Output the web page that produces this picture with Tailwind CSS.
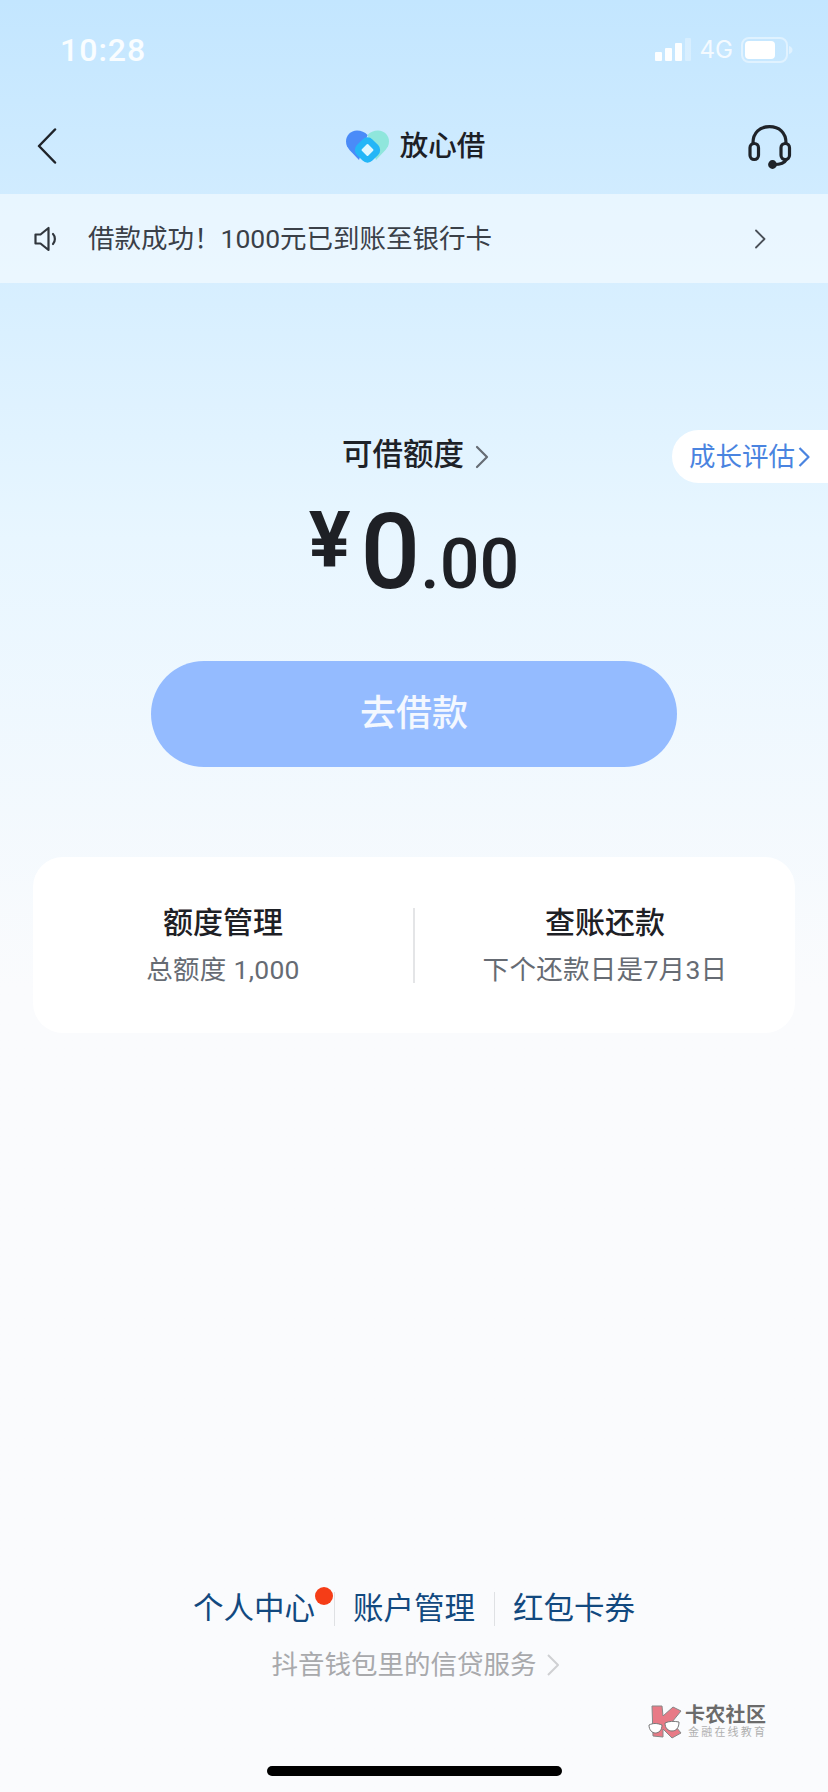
<!DOCTYPE html>
<html lang="zh-CN">
<head>
    <meta charset="UTF-8">
    <meta name="viewport" content="width=device-width, initial-scale=1.0">
    <title>放心借</title>
    <script src="https://cdn.jsdelivr.net/npm/@tailwindcss/browser@4"></script>
</head>
<body class="font-['Roboto','Noto_Sans_CJK_SC',sans-serif]">
    <div class="relative w-[828px] h-[1792px] overflow-hidden flex flex-col bg-gradient-to-b from-[#c3e6ff] via-[#e8f6ff] via-30% to-[#fafbfd] to-55%">
        <!-- status bar -->
        <div class="h-[100px] shrink-0 flex justify-between items-start pl-[60px] pr-[33px]">
            <span class="mt-[34px] text-[32px] leading-[32px] font-medium text-white/90 tracking-[1px]">10:28</span>
            <div class="flex items-center mt-[36px] h-[27px]">
                <svg width="37" height="24" viewBox="0 0 37 24" class="mt-[1px]">
                    <rect x="0" y="14" width="7" height="9" rx="1" fill="#fff" fill-opacity=".95"/>
                    <rect x="10" y="10" width="7" height="13" rx="1" fill="#fff" fill-opacity=".95"/>
                    <rect x="20" y="5" width="7" height="18" rx="1" fill="#fff" fill-opacity=".95"/>
                    <rect x="30" y="0" width="6" height="23" rx="1" fill="#fff" fill-opacity=".3"/>
                </svg>
                <span class="ml-[8px] font-['Inter',sans-serif] text-[24px] leading-[27px] text-white/80">4G</span>
                <svg width="54" height="26" viewBox="0 0 54 26" class="ml-[8px]">
                    <rect x="1" y="1" width="45" height="24" rx="7" fill="none" stroke="#fff" stroke-opacity=".45" stroke-width="2"/>
                    <rect x="4" y="4" width="30" height="18" rx="4" fill="#fff"/>
                    <path d="M48 9c2 .5 3.500 2 3.500 4s-1.500 3.500-3.500 4z" fill="#fff" fill-opacity=".45"/>
                </svg>
            </div>
        </div>

        <!-- nav -->
        <div class="h-[94px] shrink-0 grid grid-cols-[1fr_auto_1fr] items-center pl-[37px] pr-[36px]">
            <svg class="mt-[-2px]" width="20" height="36" viewBox="0 0 20 36" fill="none">
                <path d="M18 1.500 2 18l16 16.500" stroke="#1f2329" stroke-width="2.500" stroke-linecap="round" stroke-linejoin="round"/>
            </svg>
            <div class="flex items-center ml-[2px]">
                <svg width="43" height="35" viewBox="0 0 43 35">
                    <path d="M21.500 5C24 2 28 .5 32 .5C38.500 .5 43 5.500 43 11.500C43 15 41.500 17.500 39.500 20L30 30Z" fill="#8fe6dc"/>
                    <path d="M21.500 5C19 2 15 .5 11 .5C4.500 .5 0 5.500 0 11.500C0 15 1.500 17.500 3.500 20L13 30Z" fill="#4a8bf8"/>
                    <rect x="-11" y="-11" width="22" height="22" rx="7" transform="translate(21.500 20) rotate(45)" fill="#24b6f7"/>
                    <rect x="-4.500" y="-4.500" width="9" height="9" rx="1" transform="translate(21.500 20) rotate(45)" fill="#dff7ff"/>
                </svg>
                <span class="ml-[11px] text-[28.500px] leading-[36px] font-medium text-[#1c2026]">放心借</span>
            </div>
            <svg class="justify-self-end" width="44" height="44" viewBox="0 0 44 44" fill="none" stroke="#1f2329" stroke-width="3.200" stroke-linecap="round">
                <path d="M5 18C5 7.500 12 1.700 21.500 1.700S38 7.500 38 18"/>
                <rect x="2" y="18.500" width="8.500" height="16" rx="4.200"/>
                <rect x="33" y="18.500" width="8.500" height="16" rx="4.200"/>
                <path d="M38 35c-1.500 3-6 4.500-12 4.500"/>
                <circle cx="24.500" cy="39.500" r="2.800" fill="#1f2329"/>
            </svg>
        </div>

        <!-- notice -->
        <div class="h-[89px] shrink-0 flex items-center bg-white/50 pl-[34px] pr-[62px]">
            <svg width="24" height="26" viewBox="0 0 24 26" fill="none" stroke="#30363d" stroke-width="2.200" stroke-linejoin="round" stroke-linecap="round">
                <path d="M1.500 8.500h5L14.500 2v22L6.500 17.500h-5z"/>
                <path d="M19 8c2.500 2.500 2.500 7.500 0 10"/>
            </svg>
            <span class="ml-[30px] text-[26.500px] leading-[36px] text-[#3a4048]">借款成功！1000元已到账至银行卡</span>
            <svg class="ml-auto" width="12" height="20" viewBox="0 0 12 20" fill="none">
                <path d="M2 1.500 10.500 10 2 18.500" stroke="#4a5058" stroke-width="1.800" stroke-linecap="round" stroke-linejoin="round"/>
            </svg>
        </div>

        <!-- balance -->
        <div class="mt-[148px] h-[48px] flex items-center justify-center pl-[3px]">
            <span class="text-[30.500px] leading-[48px] font-medium text-[#1e2228]">可借额度</span>
            <svg class="ml-[11px] mt-[4px]" width="14" height="24" viewBox="0 0 14 24" fill="none">
                <path d="M2 2l10 10L2 22" stroke="#666c74" stroke-width="2.200" stroke-linecap="round" stroke-linejoin="round"/>
            </svg>
        </div>
        <div class="absolute top-[430px] right-0 h-[53px] w-[156px] flex items-center pl-[17px] bg-white rounded-l-full text-[26.500px] text-[#4a84e0]">
            成长评估
            <svg class="ml-[3px]" width="12" height="22" viewBox="0 0 12 22" fill="none">
                <path d="M1.500 2 10.500 11l-9 9" stroke="#4a84e0" stroke-width="2.200" stroke-linejoin="round"/>
            </svg>
        </div>
        <div class="mt-[7px] h-[110px] leading-[110px] text-center font-medium text-[#1e2025] whitespace-nowrap">
            <span class="text-[78px] font-bold align-[21px]">¥</span><span class="ml-[10px] text-[105px]">0</span><span class="text-[70px]">.00</span>
        </div>

        <button class="mt-[65px] mx-auto w-[526px] h-[106px] shrink-0 rounded-full bg-[#94bbff] text-[36px] font-medium text-white/90">去借款</button>

        <!-- card -->
        <div class="mt-[90px] mx-[33px] h-[176px] shrink-0 flex items-center rounded-[30px] bg-white">
            <div class="flex-1 text-center">
                <p class="text-[30px] leading-[40px] font-medium text-[#1e2025]">额度管理</p>
                <p class="mt-[9px] text-[26.500px] leading-[36px] tracking-[0.3px] text-[#666b73]">总额度 1,000</p>
            </div>
            <div class="w-[2px] h-[75px] bg-[#e4e5e7]"></div>
            <div class="flex-1 text-center">
                <p class="text-[30px] leading-[40px] font-medium text-[#1e2025]">查账还款</p>
                <p class="mt-[9px] text-[26.500px] leading-[36px] tracking-[0.3px] text-[#666b73]">下个还款日是7月3日</p>
            </div>
        </div>

        <!-- footer -->
        <div class="mt-auto flex flex-col items-center">
            <div class="flex items-center text-[30.500px] leading-[40px] text-[#12497f]">
                <span class="relative">
                    个人中心
                    <span class="absolute top-[-2px] right-[-18px] w-[18px] h-[18px] rounded-full bg-[#f53d17]"></span>
                </span>
                <span class="ml-[19px] mr-[18px] w-[1px] h-[34px] bg-[#dfe1e4]"></span>
                <span>账户管理</span>
                <span class="ml-[19px] mr-[18px] w-[1px] h-[34px] bg-[#dfe1e4]"></span>
                <span>红包卡券</span>
            </div>
            <div class="mt-[18px] pl-[3px] flex items-center">
                <span class="text-[26.500px] leading-[36px] text-[#a8a9ac]">抖音钱包里的信贷服务</span>
                <svg class="ml-[9px]" width="14" height="24" viewBox="0 0 14 24" fill="none">
                    <path d="M2 2l10 10L2 22" stroke="#cfd0d3" stroke-width="2" stroke-linejoin="round"/>
                </svg>
            </div>
            <div class="mt-[83px] mb-[16px] w-[295px] h-[10px] rounded-full bg-black"></div>
        </div>

        <!-- watermark -->
        <div class="absolute left-[648px] top-[1705px] flex items-center">
            <svg width="34" height="34" viewBox="0 0 34 34">
                <path d="M4 1 14 1 15 11 25 2 33 6 24 17 33 28 24 33 15 24 15 32 5 31Z" fill="#e87a86" stroke="#888" stroke-width="1"/>
                <path d="M1 20c4-2 8-2 13 0c0 5-3 8-6.500 8S1 25 1 20ZM17 18c4-2 9-2 14-1c0 6-3 9-7 9s-7-3-7-8Z" fill="#fff" stroke="#777" stroke-width="1"/>
            </svg>
            <div class="ml-[6px] flex flex-col">
                <span class="ml-[-3px] text-[20px] leading-[21px] font-bold text-[#6b6b6b] tracking-[0.3px]">卡农社区</span>
                <span class="text-[11px] leading-[13px] tracking-[2.200px] text-[#b0b0b0]">金融在线教育</span>
            </div>
        </div>
    </div>
</body>
</html>
